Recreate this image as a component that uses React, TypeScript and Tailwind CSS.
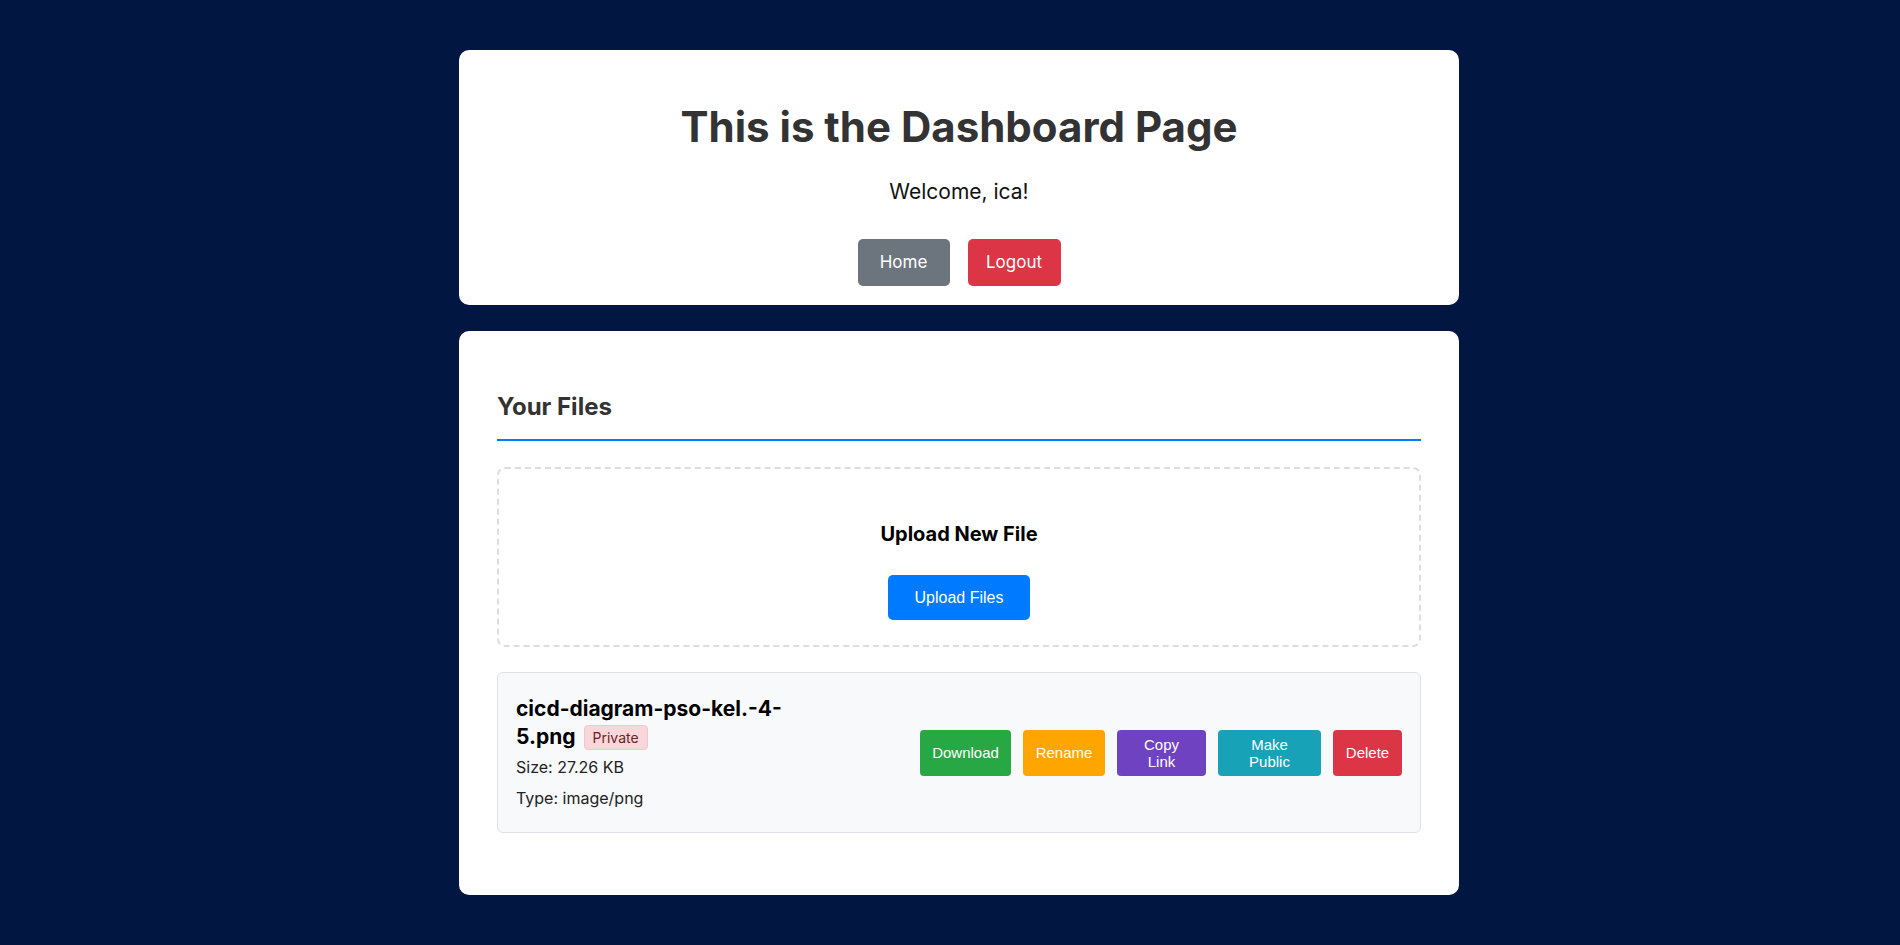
export default function App() {
  return (
    <div className="min-h-screen bg-[#011640] pl-[18px] pt-[50px] pb-[40px] font-[Inter,sans-serif]">
      <div className="mx-auto w-[1000px]">
        <div className="rounded-[10px] bg-white pt-[52px] pb-[19px] text-center">
          <h1 className="text-[42px] leading-[49px] font-bold text-[#333]">This is the Dashboard Page</h1>
          <p className="mt-[26px] text-[21px] leading-[30px] text-[#111]">Welcome, ica!</p>
          <div className="mt-[32px] flex justify-center gap-[18px]">
            <button className="h-[47px] w-[92px] rounded-[5px] bg-[#6c757d] text-[17px] text-white">Home</button>
            <button className="h-[47px] w-[93px] rounded-[5px] bg-[#dc3545] text-[17px] text-white">Logout</button>
          </div>
        </div>

        <div className="mt-[26px] rounded-[10px] bg-white px-[38px] pt-[60px] pb-[62px]">
          <h2 className="border-b-2 border-[#007bff] pb-[16px] text-[24px] leading-[32px] font-bold text-[#333]">Your Files</h2>

          <div className="mt-[26px] flex flex-col items-center rounded-[8px] border-2 border-dashed border-[#ddd] pt-[51px] pb-[25px]">
            <h3 className="text-[20px] leading-[28px] font-bold text-black">Upload New File</h3>
            <button className="mt-[27px] h-[45px] w-[142px] rounded-[5px] bg-[#007bff] font-[Liberation_Sans,Arial,sans-serif] text-[16px] text-white">
              Upload Files
            </button>
          </div>

          <div className="mt-[25px] flex items-center justify-between rounded-[6px] border border-[#dee2e6] bg-[#f8f9fa] px-[18px] py-[22px]">
            <div className="w-[290px]">
              <div className="text-[21px] leading-[28px] font-bold text-black">
                <span className="block">cicd-diagram-pso-kel.-4-</span>
                <div className="flex items-center">
                  <span>5.png</span>
                  <span className="ml-[8px] rounded-[4px] border border-[#f5c6cb] bg-[#f8d7da] px-[8px] py-[2px] text-[14px] leading-[19px] font-normal text-[#721c24]">
                    Private
                  </span>
                </div>
              </div>
              <p className="mt-[4px] text-[16px] leading-[24px] text-[#222]">Size: 27.26 KB</p>
              <p className="mt-[7px] text-[16px] leading-[24px] text-[#222]">Type: image/png</p>
            </div>
            <div className="flex gap-3 font-[Liberation_Sans,Arial,sans-serif] text-[15px] leading-[17px] text-white">
              <button className="h-[46px] w-[91px] rounded-[4px] bg-[#28a745]">Download</button>
              <button className="h-[46px] w-[82px] rounded-[4px] bg-[#ffa500]">Rename</button>
              <button className="h-[46px] w-[89px] rounded-[4px] bg-[#6f42c1] px-3">Copy Link</button>
              <button className="h-[46px] w-[103px] rounded-[4px] bg-[#17a2b8] px-3">Make Public</button>
              <button className="h-[46px] w-[69px] rounded-[4px] bg-[#dc3545]">Delete</button>
            </div>
          </div>
        </div>
      </div>
    </div>
  );
}
